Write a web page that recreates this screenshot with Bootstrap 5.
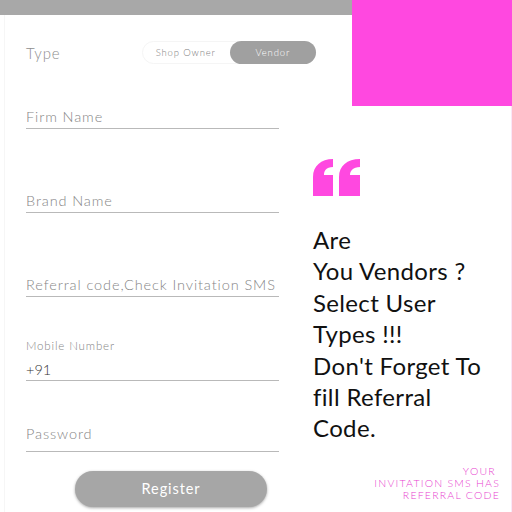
<!DOCTYPE html>
<html lang="en">
<head>
<meta charset="utf-8">
<title>Register</title>
<link rel="stylesheet" href="https://cdn.jsdelivr.net/npm/bootstrap@5.3.0/dist/css/bootstrap.min.css">
<style>
html,body{margin:0;height:512px;overflow:hidden;background:#fff}
.sheet{display:grid;grid-template-columns:313px 39px 160px;grid-template-rows:106px 406px;width:512px;height:512px;font-family:"Lato","Open Sans",sans-serif}
.head-cell{grid-column:1 / 3;grid-row:1}
.top-bar{height:15px;background:#a8a8a8}
.type-row{height:91px;padding:26px 36px 0 21px;margin-left:4px;border-left:1px solid #f6f6f6;align-items:flex-start}
.type-label{font-size:15px;line-height:24px;color:#8e8e8e;font-weight:300;letter-spacing:.9px;margin-right:auto}
.switcher{width:174px;height:23px;border:1px solid #f5f5f5;border-radius:12px;font-size:9.5px;font-weight:300;letter-spacing:.85px;color:#808080}
.switch-off{width:87px;line-height:21px;text-align:center;padding-right:1px}
.switch-on{width:87px;line-height:23px;height:23px;margin-top:-1px;margin-right:-1px;text-align:center;background:#a0a0a0;color:#fff;border-radius:12px}
.pink-block{grid-column:3;grid-row:1;background:#ff48e0}
.form-cell{grid-column:1;grid-row:2;margin-left:4px;padding-left:21px;border-left:1px solid #f6f6f6}
.field{width:253px;border-bottom:1px solid #b9b9b9;font-size:14.5px;line-height:20px;color:#858585;font-weight:300;letter-spacing:.9px}
.f-firm{height:23px;padding-top:1px}
.f-brand{height:23px;margin-top:61px;padding-top:1px}
.f-ref{height:23px;margin-top:61px;padding-top:1px;white-space:nowrap}
.f-mobile{height:44px;margin-top:40px;padding-top:1px}
.mobile-cap{font-size:11.5px;line-height:16px;letter-spacing:.85px;display:block;color:#858585}
.mobile-val{display:block;color:#333;margin-top:7px;line-height:18px;letter-spacing:0}
.f-pass{height:32px;margin-top:39px;padding-top:4px}
.reg-btn{display:block;width:192px;height:36px;margin:19px 0 0 49px;padding:0;border:0;border-radius:18px;background:#a6a6a6;color:#fff;font-size:14.5px;letter-spacing:.9px;box-shadow:0 1px 3px rgba(0,0,0,.35)}
.quote-cell{grid-column:2 / 4;grid-row:2;border-right:1px solid #fbe6f8;padding-top:53px;display:flex;flex-direction:column}
.quote-icon{display:block;width:47px;height:37px}
.quote-text{margin:28px 0 0;font-size:24px;font-weight:400;line-height:31.4px;color:#111;letter-spacing:.35px}
.note{margin:auto 11px 11px 0;text-align:right;font-size:10.5px;font-weight:300;line-height:12px;letter-spacing:1.22px;color:#e83fd0;text-transform:uppercase}
</style>
</head>
<body>
<div class="sheet">
  <div class="head-cell">
    <div class="top-bar"></div>
    <div class="type-row d-flex">
      <span class="type-label">Type</span>
      <div class="switcher d-flex">
        <span class="switch-off">Shop Owner</span>
        <span class="switch-on">Vendor</span>
      </div>
    </div>
  </div>
  <div class="pink-block"></div>
  <div class="form-cell">
    <div class="field f-firm">Firm Name</div>
    <div class="field f-brand">Brand Name</div>
    <div class="field f-ref">Referral code,Check Invitation SMS</div>
    <div class="field f-mobile"><span class="mobile-cap">Mobile Number</span><span class="mobile-val">+91</span></div>
    <div class="field f-pass">Password</div>
    <button type="button" class="btn reg-btn">Register</button>
  </div>
  <div class="quote-cell">
    <svg class="quote-icon" viewBox="0 0 47 37" aria-hidden="true"><path fill="#ff48e0" d="M0 37V18C0 7 8 0 20 0V8C13 8 11 12 11 16H20V37ZM26 37V18C26 7 34 0 47 0V8C40 8 37 12 37 16H47V37Z"/></svg>
    <p class="quote-text">Are<br>You Vendors ?<br>Select User<br>Types !!!<br>Don't Forget To<br>fill Referral<br>Code.</p>
    <p class="note">Your&nbsp;<br>Invitation SMS has<br>Referral Code</p>
  </div>
</div>
<script src="https://cdn.jsdelivr.net/npm/bootstrap@5.3.0/dist/js/bootstrap.bundle.min.js"></script>
</body>
</html>
